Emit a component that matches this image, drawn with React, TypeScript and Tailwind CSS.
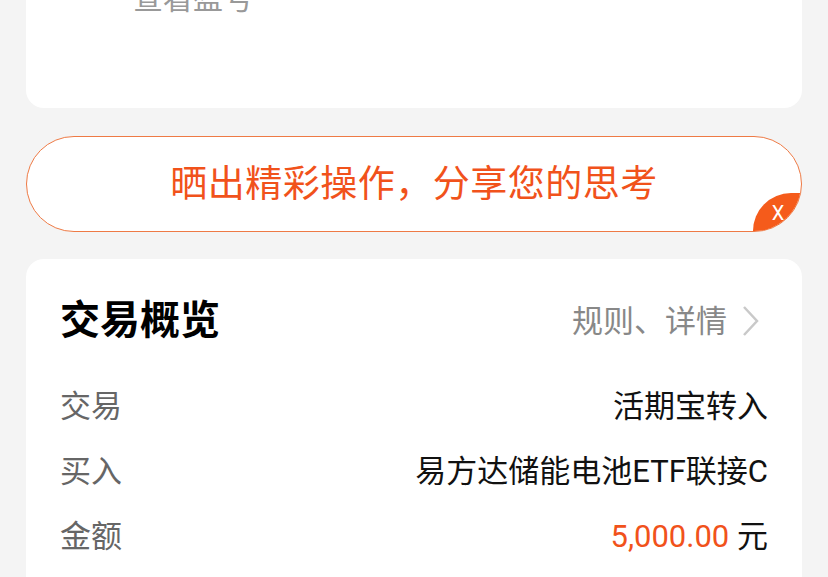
const font = { fontFamily: "Roboto, 'Noto Sans CJK SC', sans-serif" };

function Row({ label, children }: { label: string; children: React.ReactNode }) {
    return (
        <div className="h-[65px] flex items-center justify-between">
            <span className="text-[31px] leading-none text-[#666666]">{label}</span>
            <span className="text-[31px] leading-none text-[#111111]">{children}</span>
        </div>
    );
}

export default function App() {
    return (
        <div className="w-[828px] h-[577px] overflow-hidden bg-[#f4f4f4]" style={font}>
            <div className="mx-[26px] -mt-[60px] h-[168px] rounded-b-[18px] bg-white pl-[107px] pt-[44px]">
                <span className="text-[30px] leading-none text-[#999999]">查看盈亏</span>
            </div>

            <div className="relative mx-[26px] mt-[28px] h-[96px] rounded-full border border-[#ee7a45] bg-white overflow-hidden flex items-center justify-center">
                <span className="text-[37px] leading-none text-[#f1521b] tracking-[0.5px]">晒出精彩操作，分享您的思考</span>
                <div className="absolute right-0 bottom-0 w-[48px] h-[38px] rounded-tl-[38px] bg-[#f55b1b] flex items-center justify-center pl-[2px] pt-[2px]">
                    <span className="text-[20px] leading-none text-white">X</span>
                </div>
            </div>

            <div className="mx-[26px] mt-[27px] h-[400px] rounded-t-[18px] bg-white px-[34px] pt-[42px]">
                <div className="flex items-center justify-between h-[40px]">
                    <span className="text-[40px] leading-none font-bold text-black">交易概览</span>
                    <div className="flex items-center">
                        <span className="text-[31px] leading-none text-[#888888]">规则、详情</span>
                        <svg width="22" height="34" viewBox="0 0 22 34" className="ml-[13px] mr-[6px]">
                            <polyline points="4,3 17,17 4,31" fill="none" stroke="#c9c9c9" strokeWidth="2.5" />
                        </svg>
                    </div>
                </div>
                <div className="mt-[33px]">
                    <Row label="交易">活期宝转入</Row>
                    <Row label="买入">易方达储能电池ETF联接C</Row>
                    <Row label="金额">
                        <span className="text-[#f1521b]">5,000.00</span> 元
                    </Row>
                </div>
            </div>
        </div>
    );
}
